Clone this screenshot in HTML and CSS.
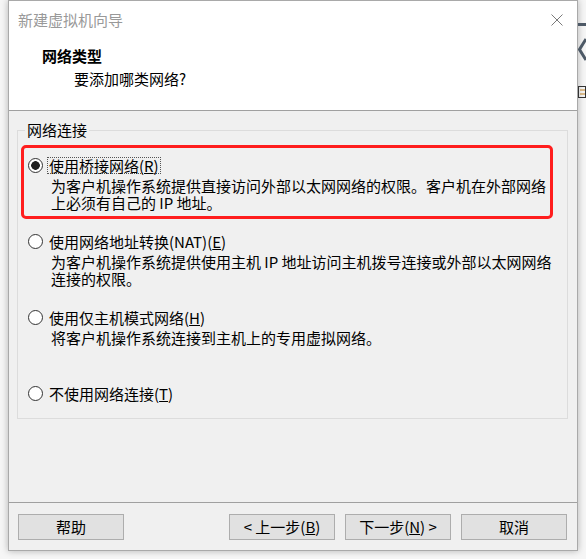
FILE: index.html
```html
<!DOCTYPE html>
<html lang="zh-CN">
<head>
<meta charset="utf-8">
<title>新建虚拟机向导</title>
<link rel="stylesheet" href="styles.css">
</head>
<body>
<div class="page">
  <div class="window">
    <div class="titlebar">
      <span class="title">新建虚拟机向导</span>
      <svg class="close" width="12" height="12" viewBox="0 0 12 12"><path d="M0.5 0.5 L11.5 11.5 M11.5 0.5 L0.5 11.5" stroke="#7a7a7a" stroke-width="1" fill="none"/></svg>
    </div>
    <div class="header">
      <div class="h-title">网络类型</div>
      <div class="h-sub">要添加哪类网络?</div>
    </div>
    <div class="content">
      <div class="group">
        <span class="group-label">网络连接</span>
        <div class="highlight">
          <div class="option first">
            <div class="opt-head"><span class="radio checked"></span><span class="opt-label focus">使用桥接网络(<u>R</u>)</span></div>
            <div class="opt-desc">为客户机操作系统提供直接访问外部以太网网络的权限。客户机在外部网络<br>上必须有自己的 IP 地址。</div>
          </div>
        </div>
        <div class="option">
          <div class="opt-head"><span class="radio"></span><span class="opt-label">使用网络地址转换(NAT)(<u>E</u>)</span></div>
          <div class="opt-desc">为客户机操作系统提供使用主机 IP 地址访问主机拨号连接或外部以太网网络<br>连接的权限。</div>
        </div>
        <div class="option">
          <div class="opt-head"><span class="radio"></span><span class="opt-label">使用仅主机模式网络(<u>H</u>)</span></div>
          <div class="opt-desc">将客户机操作系统连接到主机上的专用虚拟网络。</div>
        </div>
        <div class="option last">
          <div class="opt-head"><span class="radio"></span><span class="opt-label">不使用网络连接(<u>T</u>)</span></div>
        </div>
      </div>
    </div>
    <div class="footer">
      <button class="btn">帮助</button>
      <div class="spacer"></div>
      <button class="btn">&lt; 上一步(<u>B</u>)</button>
      <button class="btn">下一步(<u>N</u>) &gt;</button>
      <button class="btn">取消</button>
    </div>
  </div>
  <svg class="strip" width="8" height="110" viewBox="0 0 8 110">
    <rect x="0" y="23" width="8" height="3" fill="#4d5966"/>
    <path d="M8 39 L1.5 49.5 L8 60" stroke="#4d5966" stroke-width="3" fill="none"/>
    <rect x="0.5" y="86.5" width="7" height="11" fill="none" stroke="#333" stroke-width="1"/>
    <path d="M2 90 H7 M2 94 H7" stroke="#c08020" stroke-width="1"/>
  </svg>
</div>
</body>
</html>
```
FILE: styles.css
```css
html, body {
  margin: 0;
  padding: 0;
}
body {
  background: #f6f6f6;
  overflow: hidden;
  font-family: "Noto Sans CJK SC", "Microsoft YaHei", sans-serif;
  font-size: 15px;
  color: #000;
}
.page {
  display: flex;
  align-items: flex-start;
  width: 586px;
  height: 559px;
}
.window {
  margin-left: 8px;
  width: 570px;
  height: 551px;
  box-sizing: border-box;
  border: 1px solid #a9a9a9;
  background: #f0f0f0;
  box-shadow: 0 0 7px rgba(0, 0, 0, 0.28);
  display: flex;
  flex-direction: column;
  flex-shrink: 0;
}
.titlebar {
  height: 38px;
  background: #fff;
  display: flex;
  align-items: center;
  justify-content: space-between;
  padding-left: 9px;
  padding-right: 14px;
  flex-shrink: 0;
}
.title {
  color: #999;
  line-height: 20px;
}
.close {
  display: block;
}
.header {
  height: 72px;
  box-sizing: border-box;
  background: #fff;
  border-bottom: 1px solid #a0a0a0;
  padding-top: 7px;
  padding-left: 33px;
  flex-shrink: 0;
}
.h-title {
  font-weight: bold;
  line-height: 20px;
}
.h-sub {
  line-height: 20px;
  margin-top: 3px;
  margin-left: 32px;
}
.content {
  height: 392px;
  box-sizing: border-box;
  border-bottom: 1px solid #a0a0a0;
  padding-top: 19px;
  padding-left: 8px;
  flex-shrink: 0;
}
.group {
  position: relative;
  width: 551px;
  height: 289px;
  box-sizing: border-box;
  border: 1px solid #dcdcdc;
  padding-left: 10px;
  padding-top: 14px;
}
.group-label {
  position: absolute;
  top: -11px;
  left: 7px;
  padding: 0 2px;
  line-height: 20px;
  background: #f0f0f0;
}
.highlight {
  margin-left: -7px;
  width: 532px;
  box-sizing: border-box;
  border: 3px solid #ff1e1e;
  border-radius: 5px;
  padding: 7px 0 5px 4px;
}
.option {
  height: 76px;
}
.option.first {
  height: auto;
}
.highlight + .option {
  margin-top: 12px;
}
.option.last {
  height: 20px;
}
.opt-head {
  height: 20px;
  display: flex;
  align-items: center;
}
.radio {
  width: 15px;
  height: 15px;
  box-sizing: border-box;
  border: 1px solid #333;
  border-radius: 50%;
  background: #fff;
  flex-shrink: 0;
}
.radio.checked {
  background: radial-gradient(circle, #1f1f1f 0 4px, #fff 4.6px);
}
.opt-label {
  margin-left: 4px;
  padding: 0 1px;
  line-height: 15px;
  border: 1px solid transparent;
  white-space: nowrap;
}
.opt-label.focus {
  border: 1px dotted #555;
}
.opt-desc {
  margin-top: 2px;
  padding-left: 23px;
  line-height: 17px;
  white-space: nowrap;
}
.footer {
  flex: 1;
  display: flex;
  align-items: flex-start;
  padding-top: 11px;
  padding-left: 9px;
  padding-right: 10px;
  gap: 10px;
}
.spacer {
  flex: 1;
}
.btn {
  width: 106px;
  height: 26px;
  box-sizing: border-box;
  border: 1px solid #adadad;
  background: #e1e1e1;
  font-family: inherit;
  font-size: 15px;
  color: #000;
  padding: 0;
  line-height: 22px;
  margin: 0;
}
.strip {
  display: block;
  flex-shrink: 0;
}
```
